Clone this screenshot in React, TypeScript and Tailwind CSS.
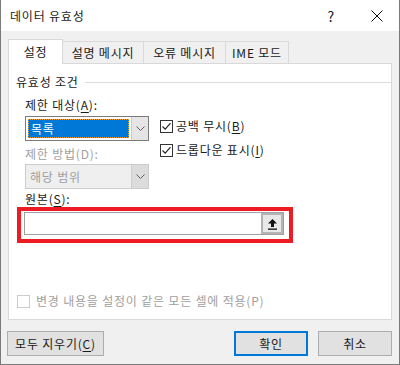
import React from "react";

const font = { fontFamily: '"Noto Sans CJK KR", "Noto Sans", sans-serif' };

function Acc({ k }: { k: string }) {
  return <span className="underline underline-offset-2">{k}</span>;
}

function Check({ checked, disabled }: { checked?: boolean; disabled?: boolean }) {
  return (
    <div
      className={`w-[13px] h-[13px] shrink-0 border bg-white flex items-center justify-center ${
        disabled ? "border-[#cccccc]" : "border-[#333333]"
      }`}
    >
      {checked && (
        <svg width="11" height="11" viewBox="0 0 11 11">
          <path d="M1.5 5.5 L4.2 8.2 L9.5 2.2" fill="none" stroke="#222" strokeWidth="1.2" />
        </svg>
      )}
    </div>
  );
}

function Chevron({ color }: { color: string }) {
  return (
    <svg width="9" height="5" viewBox="0 0 9 5">
      <path d="M0.5 0.5 L4.5 4.5 L8.5 0.5" fill="none" stroke={color} strokeWidth="1" />
    </svg>
  );
}

export default function App() {
  return (
    <div
      className="w-[400px] h-[365px] bg-[#f0f0f0] border-x border-b border-[#7a7a7a] text-[12px] leading-[16px] tracking-[0.8px] text-[#1a1a1a] overflow-hidden"
      style={font}
    >
      {/* title bar */}
      <div className="h-[31px] bg-white flex items-center pl-[9px] pr-[16px]">
        <span className="text-[12px]">데이터 유효성</span>
        <span className="ml-auto mr-[36px] text-[14px]">?</span>
        <svg width="12" height="12" viewBox="0 0 12 12">
          <path d="M0.5 0.5 L11.5 11.5 M11.5 0.5 L0.5 11.5" stroke="#111" strokeWidth="1" />
        </svg>
      </div>

      <div className="pl-[7px] pr-[7px]">
        {/* tabs */}
        <div className="mt-[8px] flex items-end h-[24px]">
          <div className="relative z-10 -mb-px w-[55px] h-[25px] bg-white border border-b-0 border-[#d9d9d9] flex items-center justify-center">
            설정
          </div>
          <div className="w-[81px] h-[22px] border-t border-r border-[#d9d9d9] flex items-center justify-center">
            설명 메시지
          </div>
          <div className="w-[82px] h-[22px] border-t border-r border-[#d9d9d9] flex items-center justify-center">
            오류 메시지
          </div>
          <div className="w-[63px] h-[22px] border-t border-r border-[#d9d9d9] flex items-center justify-center">
            IME 모드
          </div>
        </div>

        {/* panel */}
        <div className="h-[257px] bg-white border border-[#d9d9d9] pt-[10px]">
          <div className="flex items-center pl-[7px]">
            <span>유효성 조건</span>
            <div className="flex-1 h-px bg-[#dcdcdc] ml-[6px]" />
          </div>

          <div className="pl-[16px]">
            <div className="mt-[7px]">
              제한 대상(<Acc k="A" />):
            </div>
            <div className="flex">
              <div className="w-[124px]">
                <div className="mt-[3px] h-[25px] border border-[#7a7a7a] flex bg-white">
                  <div className="flex-1 p-[2px]">
                    <div className="h-full bg-[#0078d7] border border-dotted border-[#f0a030] text-white pl-[2px] leading-[17px]">
                      목록
                    </div>
                  </div>
                  <div className="w-[17px] bg-[#e5e5e5] border-l border-[#cccccc] flex items-center justify-center">
                    <Chevron color="#606060" />
                  </div>
                </div>
                <div className="mt-[5px] text-[#a0a0a0]">제한 방법(D):</div>
                <div className="mt-[2px] h-[25px] border border-[#cccccc] flex bg-[#efefef] text-[#a0a0a0]">
                  <div className="flex-1 pl-[4px] flex items-center">해당 범위</div>
                  <div className="w-[17px] bg-[#dcdcdc] border-l border-[#cccccc] flex items-center justify-center">
                    <Chevron color="#606060" />
                  </div>
                </div>
              </div>
              <div className="ml-[11px] pt-[3px] flex flex-col gap-[8px]">
                <div className="flex items-center gap-[3px] h-[16px] mt-[2px]">
                  <Check checked />
                  <span>
                    공백 무시(<Acc k="B" />)
                  </span>
                </div>
                <div className="flex items-center gap-[3px] h-[16px]">
                  <Check checked />
                  <span>
                    드롭다운 표시(<Acc k="I" />)
                  </span>
                </div>
              </div>
            </div>

            <div className="mt-[2px]">
              원본(<Acc k="S" />):
            </div>
          </div>

          {/* highlighted source box */}
          <div className="ml-[8px] w-[276px] h-[36px] border-[4px] border-[#ed1c24] pl-[3px] pr-[5px] pt-px">
            <div className="h-[23px] border border-[#a0a0a0] flex justify-end bg-white">
              <div className="w-[22px] h-full border-[2px] border-[#b4b4b4] bg-[#e8e8e8] flex items-center justify-center">
                <svg width="11" height="12" viewBox="0 0 11 12">
                  <path d="M5.5 1 L10 5.5 L7 5.5 L7 9 L4 9 L4 5.5 L1 5.5 Z" fill="#111" />
                  <rect x="1" y="10.5" width="9" height="1.3" fill="#111" />
                </svg>
              </div>
            </div>
          </div>

          <div className="mt-[50px] pl-[8px] flex items-center gap-[6px] text-[#a0a0a0]">
            <Check disabled />
            <span>변경 내용을 설정이 같은 모든 셀에 적용(P)</span>
          </div>
        </div>

        {/* buttons */}
        <div className="mt-[11px] -ml-px flex">
          <button className="w-[97px] h-[25px] bg-[#e1e1e1] border border-[#adadad]">
            모두 지우기(<Acc k="C" />)
          </button>
          <button className="ml-auto w-[74px] h-[25px] bg-[#e1e1e1] border-[2px] border-[#0078d7]">확인</button>
          <button className="ml-[10px] w-[74px] h-[25px] bg-[#e1e1e1] border border-[#adadad]">취소</button>
        </div>
      </div>
    </div>
  );
}
